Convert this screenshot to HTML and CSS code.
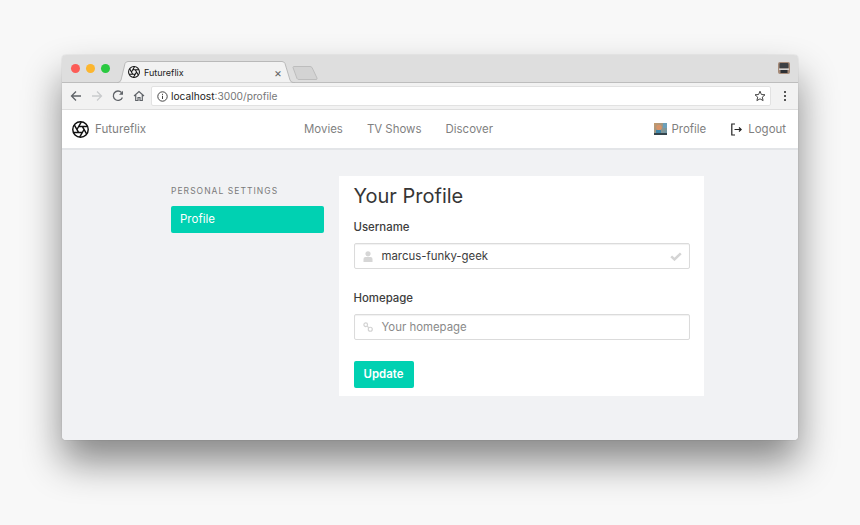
FILE: index.html
```html
<!DOCTYPE html>
<html lang="en">
<head>
<meta charset="utf-8">
<title>Futureflix</title>
<link rel="stylesheet" href="styles.css">
</head>
<body>
<svg class="sprite" width="0" height="0" aria-hidden="true">
  <symbol id="aperture" viewBox="1 1 22 22">
    <g fill="none" stroke="#111" stroke-width="1.900">
      <circle cx="12" cy="12" r="10"/>
      <path d="M14.310 8 20.050 17.940M9.690 8H21.170M7.380 12 13.120 2.060M9.690 16 3.950 6.060M14.310 16H2.830M16.620 12 10.880 21.940"/>
    </g>
  </symbol>
</svg>
<div class="window">
  <div class="tabstrip">
    <div class="lights">
      <span class="light red"></span><span class="light yellow"></span><span class="light green"></span>
    </div>
    <div class="tab">
      <svg class="tab-shape" width="178" height="22" viewBox="0 0 178 22"><path d="M0 21.500H1Q3 21.500 4 19L8 2.500Q9 .5 11 .5H165Q167 .5 168 2.500L173 19Q174 21.500 176 21.500H178" fill="#f2f2f2" stroke="#b9b9b9"/></svg>
      <svg class="tab-icon" width="12" height="12"><use href="#aperture"/></svg>
      <span class="tab-title">Futureflix</span>
      <span class="tab-close">×</span>
    </div>
    <svg class="new-tab" width="26" height="14" viewBox="0 0 26 14"><path d="M1 1.500Q1 .5 2 .5H18Q19 .5 20 1.500L25 12Q25.500 13.500 24 13.500H7Q5.500 13.500 5 12.500Z" fill="#d3d3d3" stroke="#bdbdbd"/></svg>
    <svg class="ext" width="12" height="12" viewBox="0 0 12 12"><rect width="12" height="12" rx="2" fill="#a58a78"/><rect x="1.500" y="1" width="9" height="5.500" rx="1" fill="#3c4044"/><rect x="2.500" y="8" width="7" height="3" fill="#2c2f33"/><rect x="1" y="6.500" width="10" height="1.500" fill="#d2d2d2"/></svg>
  </div>
  <div class="toolbar">
    <svg class="tool" width="12" height="12" viewBox="0 0 12 12"><path d="M11 6H1.500M6 1.500 1.500 6 6 10.500" fill="none" stroke="#5f6368" stroke-width="1.300"/></svg>
    <svg class="tool" width="12" height="12" viewBox="0 0 12 12"><path d="M1 6h9.500M6 1.500 10.500 6 6 10.500" fill="none" stroke="#c9cbcd" stroke-width="1.300"/></svg>
    <svg class="tool" width="12" height="12" viewBox="0 0 12 12"><path d="M10.400 7.500A4.700 4.700 0 1 1 9.500 2.500" fill="none" stroke="#5f6368" stroke-width="1.300"/><path d="M11 .8V4.800H7Z" fill="#5f6368"/></svg>
    <svg class="tool" width="12" height="12" viewBox="0 0 12 12"><path d="M1 6 6 1.500 11 6M2.700 5v5.500h2.300V7.500h2v3h2.300V5" fill="none" stroke="#5f6368" stroke-width="1.200"/></svg>
    <div class="omnibox">
      <svg class="info" width="11" height="11" viewBox="0 0 11 11"><circle cx="5.500" cy="5.500" r="4.700" fill="none" stroke="#444" stroke-width="1"/><path d="M5.500 4.800v3.200M5.500 2.800v1.100" stroke="#444" stroke-width="1"/></svg>
      <span class="host">localhost</span><span class="path">:3000/profile</span>
      <svg class="star" width="12" height="12" viewBox="0 0 12 12"><path d="M6 1.200 7.400 4.500l3.600.3-2.700 2.300.8 3.500L6 8.800l-3.100 1.800.8-3.500L1 4.800l3.600-.3Z" fill="none" stroke="#444" stroke-width="1"/></svg>
    </div>
    <div class="kebab"><i></i><i></i><i></i></div>
  </div>
  <nav class="navbar">
    <a class="brand"><svg width="17" height="17"><use href="#aperture"/></svg><span>Futureflix</span></a>
    <div class="nav-center"><a>Movies</a><a>TV Shows</a><a>Discover</a></div>
    <div class="nav-right">
      <a class="nav-icon">
        <svg width="13" height="12" viewBox="0 0 13 12"><defs><linearGradient id="sky" x1="0" y1="0" x2="1" y2="1"><stop offset="0" stop-color="#c99a6a"/><stop offset="1" stop-color="#5f94ad"/></linearGradient></defs><rect width="13" height="12" fill="url(#sky)"/><circle cx="5" cy="4.500" r="2.800" fill="#d99468"/><rect x="2" y="7" width="5" height="3" fill="#3f86a8"/><rect y="10" width="13" height="2" fill="#33444c"/><rect x="9" width="4" height="5" fill="#6ba0bb"/></svg>
        <span>Profile</span>
      </a>
      <a class="nav-icon logout">
        <svg width="11" height="13" viewBox="0 0 11 13"><path d="M4 1H.8v11H4" fill="none" stroke="#222" stroke-width="1.200"/><path d="M3.500 6.500h6.500M8 4.500l2.200 2-2.200 2" fill="none" stroke="#222" stroke-width="1.200"/></svg>
        <span>Logout</span>
      </a>
    </div>
  </nav>
  <main class="content">
    <aside class="sidebar">
      <h2 class="side-title">PERSONAL SETTINGS</h2>
      <a class="side-item">Profile</a>
    </aside>
    <section class="panel">
      <h1>Your Profile</h1>
      <label class="label">Username</label>
      <div class="input">
        <svg class="lead" width="10" height="11" viewBox="0 0 10 11"><circle cx="5" cy="2.800" r="2.600" fill="#d6d6d6"/><path d="M.5 11V8Q.5 6 2.500 6H7.500Q9.500 6 9.500 8V11Z" fill="#d6d6d6"/></svg>
        <span class="value">marcus-funky-geek</span>
        <svg class="check" width="12" height="9" viewBox="0 0 12 9"><path d="M1.200 4.300 4.500 7.400 10.800 1.300" fill="none" stroke="#d4d4d4" stroke-width="2.500"/></svg>
      </div>
      <label class="label second">Homepage</label>
      <div class="input">
        <svg class="lead" width="10" height="10" viewBox="0 0 11 11"><circle cx="3" cy="3" r="2" fill="none" stroke="#d2d2d2" stroke-width="1.300"/><circle cx="8" cy="8" r="2.200" fill="none" stroke="#d2d2d2" stroke-width="1.300"/><path d="M4.500 4.500 6.500 6.500" stroke="#d2d2d2" stroke-width="1.300"/></svg>
        <span class="placeholder">Your homepage</span>
      </div>
      <button class="button">Update</button>
    </section>
  </main>
</div>
</body>
</html>
```

FILE: styles.css
```css
* { box-sizing: border-box; }
html, body { margin: 0; height: 525px; overflow: hidden; }
body {
  background: #f8f8f8;
  padding: 55px 62px 0;
  font-family: Inter, "Liberation Sans", sans-serif;
  color: #363636;
}
.sprite { display: block; }
a { display: block; }

.window {
  position: relative;
  width: 736px;
  height: 385px;
  border-radius: 4px;
  overflow: hidden;
  background: #f1f2f4;
}
body::before {
  content: "";
  position: absolute;
  left: 62px;
  top: 55px;
  width: 736px;
  height: 385px;
  border-radius: 4px;
  box-shadow: 0 0 1px rgba(0,0,0,.35), 0 22px 38px 0 rgba(0,0,0,.46);
}

.tabstrip {
  height: 28px;
  background: #dedede;
  border-bottom: 1px solid #bdbdbd;
  display: flex;
  align-items: flex-end;
}
.lights { display: flex; gap: 6px; padding: 0 0 9px 9px; width: 55px; flex: none; }
.light { width: 9px; height: 9px; border-radius: 50%; flex: none; }
.red { background: #fc5c57; }
.yellow { background: #fcb62e; }
.green { background: #2ac940; }
.tab {
  position: relative;
  width: 176px;
  height: 22px;
  margin-bottom: -1px;
  display: flex;
  align-items: center;
  padding: 0 11px 0 11px;
  flex: none;
}
.tab-shape { position: absolute; left: 0; top: 0; }
.tab-icon, .tab-title, .tab-close { position: relative; }
.tab-icon { flex: none; }
.tab-title { margin-left: 4px; font-size: 9px; color: #222; flex: 1; }
.tab-close { font-size: 12px; color: #666; }
.new-tab { margin: 0 0 2px -1px; flex: none; }
.ext { margin: 0 8px 8px auto; flex: none; }

.toolbar {
  height: 27px;
  background: #f2f2f2;
  border-bottom: 1px solid #dedede;
  display: flex;
  align-items: center;
  padding-left: 8px;
}
.tool { flex: none; margin-right: 9px; }
.omnibox {
  width: 620px;
  height: 20px;
  margin-left: -3px;
  background: #fff;
  border: 1px solid #e2e2e2;
  border-radius: 2px;
  display: flex;
  align-items: center;
  padding: 0 4px 0 5px;
  font-size: 10.200px;
}
.info { margin-right: 3px; flex: none; }
.host { color: #222; }
.path { color: #777; }
.star { margin-left: auto; }
.kebab { margin-left: 13px; display: flex; flex-direction: column; gap: 2px; }
.kebab i { width: 2px; height: 2px; background: #555; display: block; }

.navbar {
  height: 40px;
  background: #fff;
  border-bottom: 2px solid #e3e5e8;
  display: flex;
  align-items: center;
  padding: 0 12px 0 10px;
  position: relative;
  font-size: 11.450px;
  color: #7f7f7f;
}
.brand { display: flex; align-items: center; gap: 6px; width: 232px; font-size: 11.600px; }
.nav-center { display: flex; gap: 24px; }
.nav-right { display: flex; gap: 25px; margin-left: auto; }
.nav-icon { display: flex; align-items: center; gap: 5px; }
.logout { gap: 6px; }

.content { display: flex; padding: 26px 0 0 109px; align-items: flex-start; }
.sidebar { width: 153px; flex: none; margin-right: 14.500px; }
.side-title {
  margin: 0;
  padding-top: 10px;
  height: 30px;
  font-size: 8.500px;
  line-height: 11px;
  font-weight: 400;
  letter-spacing: 1.040px;
  color: #7a7a7a;
}
.side-item {
  height: 27px;
  line-height: 26px;
  padding-left: 9px;
  background: #00d1b2;
  border-radius: 2px;
  color: #fff;
  font-size: 11.500px;
}
.panel {
  width: 365.500px;
  height: 220px;
  background: #fff;
  padding: 7px 15px 0;
}
h1 {
  margin: 0;
  font-size: 20px;
  line-height: 27px;
  font-weight: 400;
  color: #363636;
}
.label {
  display: block;
  margin-top: 10px;
  height: 15px;
  font-size: 11.400px;
  line-height: 15px;
  font-weight: 500;
  color: #3d3d3d;
}
.label.second { margin-top: 22px; }
.input {
  margin-top: 8px;
  height: 26px;
  width: 336px;
  background: #fff;
  border: 1px solid #dbdbdb;
  border-radius: 2px;
  box-shadow: inset 0 1px 1px rgba(10,10,10,.06);
  display: flex;
  align-items: center;
  padding: 0 7px 0 8px;
  font-size: 11.400px;
}
.lead { flex: none; margin-right: 9px; }
.value { color: #3d3d3d; }
.placeholder { color: #8a8a8a; }
.check { margin-left: auto; }
.button {
  display: block;
  margin-top: 21px;
  width: 60px;
  height: 26.500px;
  padding: 0;
  border: 0;
  border-radius: 2px;
  background: #00d1b2;
  color: #fff;
  font: 600 11.400px Inter, "Liberation Sans", sans-serif;
}
```
